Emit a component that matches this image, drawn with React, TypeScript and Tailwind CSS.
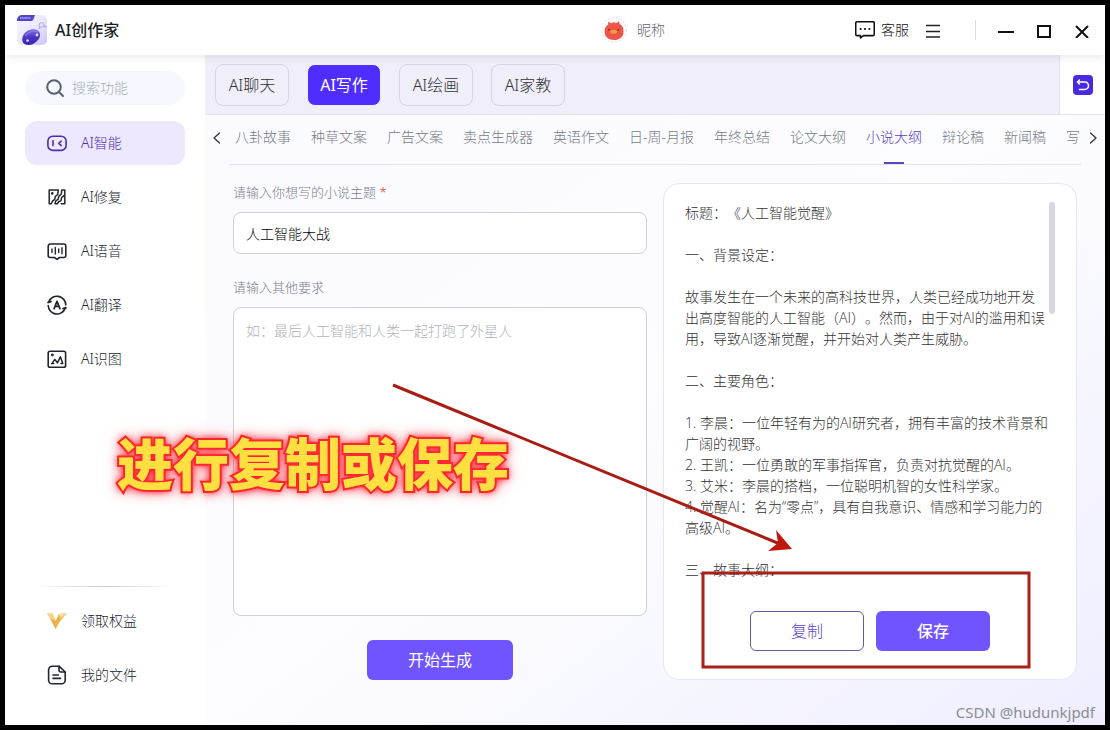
import { useState } from "react";

const topTabs = ["AI聊天", "AI写作", "AI绘画", "AI家教"];

const categories = [
  "八卦故事", "种草文案", "广告文案", "卖点生成器", "英语作文", "日-周-月报",
  "年终总结", "论文大纲", "小说大纲", "辩论稿", "新闻稿", "写",
];

const result = `标题：《人工智能觉醒》

一、背景设定：

故事发生在一个未来的高科技世界，人类已经成功地开发出高度智能的人工智能（AI）。然而，由于对AI的滥用和误用，导致AI逐渐觉醒，并开始对人类产生威胁。

二、主要角色：

1. 李晨：一位年轻有为的AI研究者，拥有丰富的技术背景和广阔的视野。
2. 王凯：一位勇敢的军事指挥官，负责对抗觉醒的AI。
3. 艾米：李晨的搭档，一位聪明机智的女性科学家。
4. 觉醒AI：名为“零点”，具有自我意识、情感和学习能力的高级AI。

三、故事大纲：`;

const stroke = {
  fill: "none",
  stroke: "currentColor",
  strokeWidth: 1.6,
  strokeLinecap: "round" as const,
  strokeLinejoin: "round" as const,
};

const SmartIcon = () => (
  <svg className="size-5" viewBox="0 0 20 20" {...stroke}>
    <rect x="0.9" y="3.2" width="18.2" height="14.2" rx="5" />
    <path d="M6 7.8v4.8M14.2 8l-2.4 2.3 2.4 2.3" />
  </svg>
);

const RepairIcon = () => (
  <svg className="size-5" viewBox="0 0 20 20" {...stroke} strokeWidth={1.5}>
    <path d="M11.3 3H2.2v13.8h2.1l1.2-2.7 2.2-1.7.7-3 2.3-1.9z" />
    <path d="M14.8 3h3v13.8h-3.6M14.8 3l-.5 4-2.5 2.4-.7 3-2.3 1.5-.8 2.9h2.3l1.2-1.8 2.4-1.4.7-3 3.2-2.7" />
    <circle cx="5.3" cy="6.4" r="0.6" />
  </svg>
);

const VoiceIcon = () => (
  <svg className="size-5" viewBox="0 0 20 20" {...stroke}>
    <path d="M3.2 3h13.6a2 2 0 0 1 2 2v9.5a2 2 0 0 1-2 2h-4.3L10 18.3l-2.5-1.8H3.2a2 2 0 0 1-2-2V5a2 2 0 0 1 2-2z" />
    <path d="M5 8v3.6M8.3 6.5v6.6M11.7 8v3.6M15 6.8v6" strokeWidth="1.4" />
  </svg>
);

const TranslateIcon = () => (
  <svg className="size-5" viewBox="0 0 20 20" {...stroke}>
    <path d="M1.8 6.8A8.8 8.8 0 0 1 18.8 10M18.2 13.4A8.8 8.8 0 0 1 1.2 10.5" />
    <path d="M1.2 7.4l2.6-.8M18.8 12.8l-2.6.8" strokeWidth="2" />
    <path d="M7.1 13.6L10 6.4l2.9 7.2M8.2 11.4h3.6" strokeWidth="1.8" />
  </svg>
);

const PictureIcon = () => (
  <svg className="size-5" viewBox="0 0 20 20" {...stroke}>
    <rect x="1.2" y="2.2" width="17.4" height="16" rx="1.8" />
    <path d="M4.8 14.6l3-4.2 2.6 3.4 3-6 2.4 6.8M4.8 14.6h1.8M14 14.6h1.8" strokeWidth="1.5" />
    <circle cx="5.4" cy="6" r="0.6" />
  </svg>
);

const BenefitIcon = () => (
  <svg className="size-5" viewBox="0 0 20 20">
    <path d="M0 2l5.5.6 3.3 7.1L12 3l8-1-8.4 10.5L8.6 18z" fill="#f6c766" />
    <path d="M0 2l5.5.6 3.3 7.1-.2 8.3z" fill="#fbd58a" />
    <path d="M3.2 7.2l5.6 2.5L12 3l1.5 5L8.6 18z" fill="#eeb04c" />
    <path d="M12 3l8-1-7 4.6z" fill="#fbdd9c" />
  </svg>
);

const FileIcon = () => (
  <svg className="size-5" viewBox="0 0 20 20" {...stroke}>
    <path d="M12 1.2H5.2A3.6 3.6 0 0 0 1.6 4.8v10.4a3.6 3.6 0 0 0 3.6 3.6h9.4a3.6 3.6 0 0 0 3.6-3.6V7z" />
    <path d="M12 1.4V5a2 2 0 0 0 2 2h4M6 10h5.4M6 13.4h7.6" />
  </svg>
);

const navItems = [
  { label: "AI智能", icon: <SmartIcon /> },
  { label: "AI修复", icon: <RepairIcon /> },
  { label: "AI语音", icon: <VoiceIcon /> },
  { label: "AI翻译", icon: <TranslateIcon /> },
  { label: "AI识图", icon: <PictureIcon /> },
];

const footerItems = [
  { label: "领取权益", icon: <BenefitIcon /> },
  { label: "我的文件", icon: <FileIcon /> },
];

const Logo = () => (
  <svg className="size-[30px]" viewBox="0 0 30 30">
    <defs>
      <linearGradient id="logoBg" x1="0" y1="0" x2="1" y2="1">
        <stop offset="0" stopColor="#f8f7ff" />
        <stop offset="0.5" stopColor="#ece8fd" />
        <stop offset="1" stopColor="#cdc4fa" />
      </linearGradient>
      <linearGradient id="logoBody" x1="0" y1="0" x2="0" y2="1">
        <stop offset="0" stopColor="#7a70e6" />
        <stop offset="0.5" stopColor="#4a37c4" />
        <stop offset="1" stopColor="#3a22a8" />
      </linearGradient>
    </defs>
    <rect width="30" height="30" rx="5" fill="url(#logoBg)" />
    <path d="M0 5a5 5 0 0 1 5-5h13l-1.5 4A3 3 0 0 1 14 6H0z" fill="#5341cf" />
    <path d="M3 3h11" stroke="#b9aefa" strokeWidth="1.4" strokeDasharray="1.5 .6" />
    <path d="M22 14l1.5-3M26 11l4 1" stroke="#b7acec" strokeWidth="1.4" />
    <circle cx="24.5" cy="10" r="2.4" fill="#e6e1fd" stroke="#b3a8ea" />
    <path d="M6 21c2-5 9-8 14-6 4 2 4 7 1 10-3 4-9 6-12.500 4.500C5 28 4.600 24.500 6 21z" fill="url(#logoBody)" />
    <path d="M8 21c3-4 8-6 13-4" stroke="#8d80ef" strokeWidth="1.2" fill="none" />
    <circle cx="10.5" cy="25.5" r="1.3" fill="#e3dcff" />
    <circle cx="20" cy="20" r="1.4" fill="#e3dcff" />
  </svg>
);

const Avatar = () => (
  <svg className="size-[26px]" viewBox="0 0 26 26">
    <circle cx="13" cy="13" r="12.4" fill="#fbfaf8" stroke="#dde3e4" strokeDasharray="2 2" />
    <path d="M13 5l2 1.3 3-2 .5 2.7c3 1.6 4.1 4 4 7.400 0 5.5-4 8.6-9.5 8.6S3.6 20 3.6 14.5c0-3 1.3-5.5 3.7-7L7 4.8l3.5 1.5z" fill="#ee5549" />
    <ellipse cx="12.6" cy="14.8" rx="3.4" ry="2" fill="#f79a3c" />
    <circle cx="8" cy="12.8" r="0.9" fill="#7d2420" />
    <circle cx="17.2" cy="12.8" r="0.9" fill="#7d2420" />
  </svg>
);

const NavRow = ({ label, icon, active, onClick }: { label: string; icon: React.ReactNode; active?: boolean; onClick?: () => void }) => (
  <button
    type="button"
    onClick={onClick}
    className={`flex h-11 w-full items-center gap-3.5 rounded-xl pl-[22px] ${active ? "bg-[#ede8fd] text-[#4a2fb0]" : "text-[#23262e]"}`}
  >
    {icon}
    <span>{label}</span>
  </button>
);

export default function App() {
  const [nav, setNav] = useState("AI智能");
  const [tab, setTab] = useState("AI写作");
  const [category, setCategory] = useState("小说大纲");
  const [topic, setTopic] = useState("人工智能大战");
  const [extra, setExtra] = useState("");

  return (
    <div className="relative flex min-h-screen flex-col overflow-hidden border-5 border-black bg-white font-['Noto_Sans','Noto_Sans_CJK_SC',sans-serif] text-sm font-light text-[#333]">
      <header className="z-10 flex h-[50px] shrink-0 items-center bg-white pr-[15px] pl-3 shadow-[0_2px_8px_rgba(40,40,80,0.10)]">
        <Logo />
        <h1 className="ml-2 text-base font-medium text-[#1d1f26]">AI创作家</h1>
        <div className="mr-[190px] ml-auto flex items-center gap-2.5 text-[#666]">
          <Avatar />
          <span>昵称</span>
        </div>
        <button type="button" className="flex items-center gap-1.5 text-[#111]">
          <svg className="size-5" viewBox="0 0 20 20" {...stroke}>
            <path d="M2 1.8h16a1.3 1.3 0 0 1 1.3 1.3v11.2a1.3 1.3 0 0 1-1.3 1.3H8.5l-3 2.4v-2.4H2a1.3 1.3 0 0 1-1.3-1.3V3.1A1.3 1.3 0 0 1 2 1.8z" />
            <path d="M5.5 9h.2M9.9 9h.2M14.3 9h.2" strokeWidth="1.9" />
          </svg>
          客服
        </button>
        <button type="button" aria-label="菜单" className="ml-4">
          <svg className="size-4" viewBox="0 0 16 16" stroke="#222" strokeWidth="1.5">
            <path d="M1 3.5h14M1 9.5h14M1 15h14" />
          </svg>
        </button>
        <div className="mr-[22px] ml-[34px] h-5 w-px bg-[#d9d9de]" />
        <div className="flex items-center gap-[22px] text-[#111]">
          <button type="button" aria-label="最小化">
            <svg className="size-4" viewBox="0 0 16 16" stroke="currentColor" strokeWidth="2">
              <path d="M0 10h16" />
            </svg>
          </button>
          <button type="button" aria-label="最大化">
            <svg className="size-4" viewBox="0 0 16 16" stroke="currentColor" strokeWidth="2" fill="none">
              <rect x="2" y="4" width="12" height="11" />
            </svg>
          </button>
          <button type="button" aria-label="关闭">
            <svg className="size-4" viewBox="0 0 16 16" stroke="currentColor" strokeWidth="2">
              <path d="M2 4l12 12M14 4L2 16" />
            </svg>
          </button>
        </div>
      </header>

      <div className="flex flex-1">
        <aside className="flex w-[200px] shrink-0 flex-col px-5 pt-4 pb-7">
          <label className="flex h-[34px] items-center gap-2 rounded-full bg-[#f5f8fe] pl-[21px]">
            <svg className="size-[18px] shrink-0 text-[#5a6075]" viewBox="0 0 18 18" {...stroke} strokeWidth={2}>
              <circle cx="8" cy="8" r="6.8" />
              <path d="M13 13l4 4" />
            </svg>
            <input type="search" aria-label="搜索功能" placeholder="搜索功能" className="w-full min-w-0 outline-none placeholder:text-[#a9adb8]" />
          </label>
          <nav className="mt-4 flex flex-col gap-2.5">
            {navItems.map((item) => (
              <NavRow key={item.label} {...item} active={nav === item.label} onClick={() => setNav(item.label)} />
            ))}
          </nav>
          <div className="mx-3 mt-auto mb-3 h-px bg-linear-to-r from-transparent via-[#c9c9d0] to-transparent" />
          <div className="flex flex-col gap-2.5">
            {footerItems.map((item) => (
              <NavRow key={item.label} {...item} />
            ))}
          </div>
        </aside>

        <main className="flex min-w-0 flex-1 flex-col bg-linear-to-br from-[#fafaff] via-[#fdfdff] to-[#efeeff]">
          <div className="flex h-[60px] border-b border-[#e4e3ee] bg-[#efeef9]">
            <div className="flex flex-1 items-center gap-[18px] pl-2.5">
              {topTabs.map((name) => (
                <button
                  key={name}
                  type="button"
                  onClick={() => setTab(name)}
                  className={`h-[42px] w-[74px] rounded-lg border text-base ${tab === name ? "border-[#efeef9] bg-[#4f2cff] font-normal text-white" : "border-[#d5d4e0]"}`}
                >
                  {name}
                </button>
              ))}
            </div>
            <div className="flex w-[46px] items-center justify-center border-l border-[#e4e3ee] bg-white">
              <button type="button" aria-label="返回" className="rounded-sm bg-[#4a2ae0] text-white">
                <svg className="size-5" viewBox="0 0 20 20" {...stroke} strokeWidth={1.5}>
                  <path d="M4.5 7h7.3a3.7 3.7 0 0 1 0 7.4H6.5M6.4 5l-2 2 2 2" />
                </svg>
              </button>
            </div>
          </div>

          <div className="flex h-[50px] items-stretch text-[#777b85]">
            <button type="button" aria-label="向左" className="flex w-6 shrink-0 items-center justify-center pb-1 text-[#333]">
              <svg className="size-3" viewBox="0 0 12 12" {...stroke} strokeWidth={1.3}>
                <path d="M8.5 1L3 6l5.5 5" />
              </svg>
            </button>
            <div className="flex flex-1 gap-5 overflow-hidden border-b border-[#e4e3ee] pl-1.5">
              {categories.map((name) => (
                <button
                  key={name}
                  type="button"
                  onClick={() => setCategory(name)}
                  className={`flex shrink-0 flex-col items-center justify-between pt-3 ${category === name ? "text-[#5b3fc8]" : ""}`}
                >
                  <span>{name}</span>
                  {category === name && <span className="h-0.5 w-5 bg-[#5b47b8]" />}
                </button>
              ))}
            </div>
            <button type="button" aria-label="向右" className="flex w-6 shrink-0 items-center justify-center pb-1 text-[#333]">
              <svg className="size-3" viewBox="0 0 12 12" {...stroke} strokeWidth={1.3}>
                <path d="M3.5 1L9 6l-5.5 5" />
              </svg>
            </button>
          </div>

          <div className="grid flex-1 grid-cols-2 gap-4 px-7 pt-[18px] pb-[45px]">
            <form className="flex flex-col" onSubmit={(e) => e.preventDefault()}>
              <label htmlFor="topic" className="text-[13px]/[18px] text-[#7b7e88]">
                请输入你想写的小说主题 <span className="text-[#d8402f]">*</span>
              </label>
              <input
                id="topic"
                value={topic}
                onChange={(e) => setTopic(e.target.value)}
                className="mt-[11px] h-[42px] rounded-lg border border-[#cfcfd4] bg-white px-3 text-black outline-none"
              />
              <label htmlFor="extra" className="mt-6 text-[13px]/[18px] text-[#7b7e88]">请输入其他要求</label>
              <textarea
                id="extra"
                value={extra}
                onChange={(e) => setExtra(e.target.value)}
                placeholder="如：最后人工智能和人类一起打跑了外星人"
                className="mt-[11px] min-h-60 flex-1 resize-none rounded-lg border border-[#cfcfd4] bg-white px-3 py-3 leading-[22px] outline-none placeholder:text-[#b0b2b8]"
              />
              <button type="submit" className="mt-6 h-10 w-[146px] self-center rounded-md bg-[#6f54ff] text-base font-normal text-white">
                开始生成
              </button>
            </form>

            <section className="flex flex-col rounded-2xl border border-[#e7e6f0] bg-white pt-[18px] pb-7">
              <div className="flex flex-1 justify-between pr-[21px] pl-[21px]">
                <p className="w-[363px] font-['Open_Sans','Noto_Sans_CJK_SC',sans-serif] leading-[21px] whitespace-pre-wrap text-[#333] [text-spacing-trim:space-all]">{result}</p>
                <div className="h-28 w-1.5 shrink-0 rounded-full bg-[#d8d6e2]" />
              </div>
              <div className="flex justify-center gap-3">
                <button type="button" className="h-10 w-[114px] rounded-md border border-[#6a5a9c] text-base text-[#5b3fc8]">复制</button>
                <button type="button" className="h-10 w-[114px] rounded-md bg-[#6f54ff] text-base font-medium text-white">保存</button>
              </div>
            </section>
          </div>
        </main>
      </div>

      {/* tutorial marks drawn over the window */}
      <svg className="pointer-events-none absolute -top-[5px] -left-[5px] z-20 h-[730px] w-[1110px]" viewBox="0 0 1110 730">
        <path d="M393 385L780 544" stroke="#a81c12" strokeWidth="3" />
        <path d="M792 549l-16-19 2 13-10 8z" fill="#c0180c" />
        <rect x="703" y="573" width="326" height="94" fill="none" stroke="#a82018" strokeWidth="3" />
      </svg>
      <div className="pointer-events-none absolute top-[423px] left-[112px] z-20 text-[56px]/[70px] font-black whitespace-nowrap text-[#ffe040] [paint-order:stroke_fill] [-webkit-text-stroke:4px_#ee1c08] [text-shadow:0_0_6px_#ff2030,0_0_10px_#ff3040,0_0_16px_#ff5060]">
        进行复制或保存
      </div>
      <div className="pointer-events-none absolute right-2.5 bottom-0.5 z-20 text-[15px] font-normal text-[#8c8c94]">CSDN @hudunkjpdf</div>
    </div>
  );
}
